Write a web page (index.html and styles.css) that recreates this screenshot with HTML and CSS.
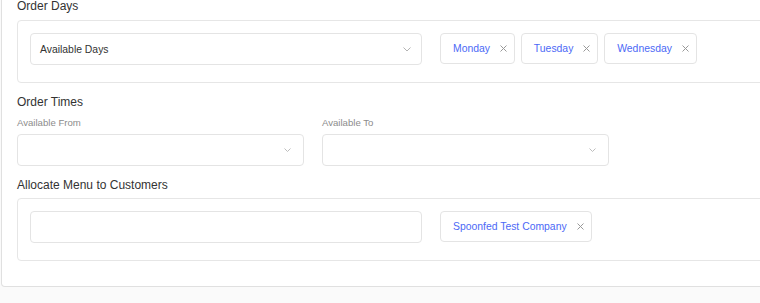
FILE: index.html
```html
<!DOCTYPE html>
<html lang="en">
<head>
  <meta charset="UTF-8">
  <title>Menu Availability</title>
  <link rel="stylesheet" href="styles.css">
</head>
<body>
  <div class="card">
    <!-- Order days -->
    <h4 class="section-title first">Order Days</h4>
    <div class="field-box">
      <div class="picker-row">
        <div class="select wide">
          <span class="select-text">Available Days</span>
          <svg class="chevron" width="8" height="5" viewBox="0 0 8 5"><path d="M0.5 0.5 L4 4 L7.5 0.5" fill="none" stroke="#b3b3b3" stroke-width="1"/></svg>
        </div>
        <div class="tags">
          <span class="tag">Monday <svg class="tag-x" width="7" height="7" viewBox="0 0 7 7"><path d="M0.5 0.5 L6.5 6.5 M6.5 0.5 L0.5 6.5" stroke="#999" stroke-width="1"/></svg></span>
          <span class="tag">Tuesday <svg class="tag-x" width="7" height="7" viewBox="0 0 7 7"><path d="M0.5 0.5 L6.5 6.5 M6.5 0.5 L0.5 6.5" stroke="#999" stroke-width="1"/></svg></span>
          <span class="tag">Wednesday <svg class="tag-x" width="7" height="7" viewBox="0 0 7 7"><path d="M0.5 0.5 L6.5 6.5 M6.5 0.5 L0.5 6.5" stroke="#999" stroke-width="1"/></svg></span>
        </div>
      </div>
    </div>

    <!-- Order times -->
    <h4 class="section-title">Order Times</h4>
    <div class="time-row">
      <div class="time-col">
        <label class="small-label">Available From</label>
        <div class="select">
          <span class="select-text"></span>
          <svg class="chevron small" width="7" height="4" viewBox="0 0 7 4"><path d="M0.5 0.5 L3.5 3.5 L6.5 0.5" fill="none" stroke="#bdbdbd" stroke-width="1"/></svg>
        </div>
      </div>
      <div class="time-col">
        <label class="small-label">Available To</label>
        <div class="select">
          <span class="select-text"></span>
          <svg class="chevron small" width="7" height="4" viewBox="0 0 7 4"><path d="M0.5 0.5 L3.5 3.5 L6.5 0.5" fill="none" stroke="#bdbdbd" stroke-width="1"/></svg>
        </div>
      </div>
    </div>

    <!-- Customers -->
    <h4 class="section-title">Allocate Menu to Customers</h4>
    <div class="field-box">
      <div class="picker-row">
        <div class="select wide input"></div>
        <div class="tags">
          <span class="tag">Spoonfed Test Company <svg class="tag-x" width="7" height="7" viewBox="0 0 7 7"><path d="M0.5 0.5 L6.5 6.5 M6.5 0.5 L0.5 6.5" stroke="#999" stroke-width="1"/></svg></span>
        </div>
      </div>
    </div>
  </div>
</body>
</html>
```

FILE: styles.css
```css
body {
  margin: 0;
  font-family: 'Liberation Sans', Arial, sans-serif;
  background: #fafafa;
  color: #333;
  overflow: hidden;
}
.card {
  width: 1100px;
  margin-left: 1px;
  background: #fff;
  border: 1px solid #e0e0e0;
  border-top: none;
  border-radius: 0 0 4px 4px;
  padding: 0 15px 25px 15px;
}
.section-title {
  margin: 11px 0 5px 0;
  padding-top: 1px;
  font-size: 12px;
  line-height: 15px;
  font-weight: normal;
  color: #333;
}
.section-title.first {
  margin: -1px 0 6px 0;
  padding-top: 0;
}
.field-box {
  border: 1px solid #e6e6e6;
  border-radius: 4px;
  padding: 12px 12px 17px 12px;
}
.picker-row {
  display: flex;
  gap: 18px;
}
.select {
  display: flex;
  align-items: center;
  justify-content: space-between;
  box-sizing: border-box;
  height: 32px;
  border: 1px solid #e4e4e4;
  border-radius: 4px;
  padding: 0 10px 0 9px;
  background: #fff;
}
.select.wide {
  width: 392px;
}
.select-text {
  font-size: 10.4px;
  color: #333;
}
.chevron {
  display: block;
}
.chevron.small {
  margin-right: 2px;
}
.tags {
  display: flex;
  gap: 6px;
}
.tag {
  display: flex;
  align-items: center;
  box-sizing: border-box;
  height: 31px;
  border: 1px solid #e4e4e4;
  border-radius: 4px;
  padding: 0 7px 0 12px;
  font-size: 10.4px;
  color: #4c69f6;
  white-space: pre;
}
.tag-x {
  display: block;
  margin-left: 7px;
}
.time-row {
  display: flex;
  gap: 18px;
}
.time-col {
  width: 287px;
}
.time-col .select {
  width: 287px;
}
.small-label {
  display: block;
  margin: 2px 0 5px 0;
  font-size: 9.6px;
  line-height: 12px;
  color: #8c8c8c;
}
```
